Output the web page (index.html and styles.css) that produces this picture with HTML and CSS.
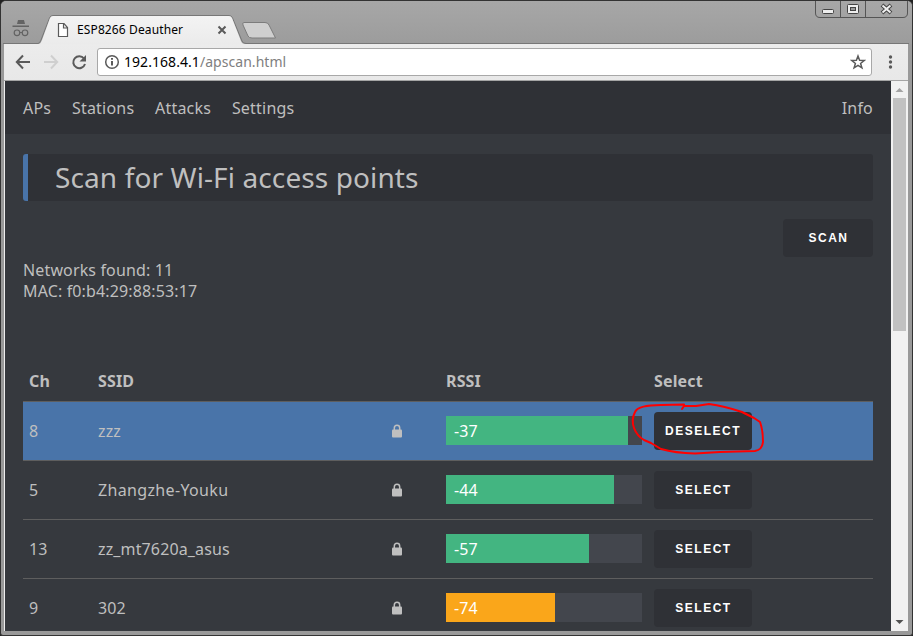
FILE: index.html
```html
<!DOCTYPE html>
<html lang="en">
<head>
<meta charset="utf-8">
<title>ESP8266 Deauther</title>
<link rel="stylesheet" href="styles.css">
</head>
<body>
<div class="window">
  <header class="tabs">
    <svg class="tabs-art" width="913" height="44" viewBox="0 0 913 44">
      <defs><linearGradient id="tab" x2="0" y2="1"><stop stop-color="#f3f3f3"/><stop offset="1" stop-color="#ebebeb"/></linearGradient></defs>
      <path d="M3 43.5H38Q40 43 41 40L49.5 18Q50.500 15.500 53 15.500H229Q231.500 15.500 232.500 18L242 41Q243 43.500 246 43.500H909" fill="none" stroke="#777"/>
      <path d="M39 44Q41 43 42 40L50 18Q51 16 53 16H229Q231 16 232 18L241 41Q242 44 245 44Z" fill="url(#tab)"/>
      <path d="M244 22.500H265Q268 22.500 269 25L275.500 38H252Q249 38 248 36L243 25Q242 22.500 244 22.500Z" fill="#cfcfcf" stroke="#7c7c7c"/>
      <path d="M17 24L18 20H24L25 24ZM12.500 25.500H29V27H12.500Z" fill="#636363"/>
      <g fill="none" stroke="#636363" stroke-width="1.200"><circle cx="17" cy="32.800" r="2.800"/><circle cx="25" cy="32.800" r="2.800"/><path d="M19.800 32.500H22.200"/></g>
      <path d="M58.500 23.500H64L67.500 27.500V36.500H58.500ZM63.500 23.500V28H67.500" fill="#fff" stroke="#5a5a5a" stroke-width="1.200"/>
      <path d="M218.500 26.500L225.500 33.500M225.500 26.500L218.500 33.500" stroke="#5a5a5a" stroke-width="2"/>
      <path d="M815.500 1V13Q815.500 17.500 820 17.500H903Q907.500 17.500 907.500 13V1M840.500 1V17M865.500 1V17" fill="none" stroke="#555"/>
      <rect x="822.500" y="9.500" width="11" height="4" rx="1" fill="#eee" stroke="#444"/>
      <rect x="847.500" y="4.500" width="11" height="9" rx="1" fill="#eee" stroke="#444"/><rect x="850.500" y="7.500" width="5" height="3" fill="#999" stroke="#444"/>
      <path d="M882 5L891 13M891 5L882 13" stroke="#444" stroke-width="4"/><path d="M882.500 5.500L890.500 12.500M890.500 5.500L882.500 12.500" stroke="#eee" stroke-width="2"/>
    </svg>
    <span class="tab-title">ESP8266 Deauther</span>
  </header>
  <div class="toolbar">
    <svg class="nav-icons" width="92" height="36" viewBox="5 44 92 36" fill="none" stroke="#5a5a5a" stroke-width="2">
      <path d="M30 62H17M23 55.500L16.800 62L23 68.500"/>
      <path d="M44 62H57M51 55.500L57.200 62L51 68.500" stroke="#cfcfcf"/>
      <path d="M84 58.500A6 6 0 1 0 85 64"/><path d="M86 55V61.500H79.500Z" fill="#5a5a5a" stroke="none"/>
    </svg>
    <div class="address">
      <svg width="16" height="16" viewBox="0 0 16 16" fill="none" stroke="#5a5a5a"><circle cx="8" cy="8" r="6.300" stroke-width="1.500"/><path d="M8 7V11.500M8 4V5.800" stroke-width="2"/></svg>
      <span class="url"><b>192.168.4.1</b>/apscan.html</span>
      <svg class="star" width="16" height="16" viewBox="0 0 16 16"><path d="M8 2L9.600 6.300L14.200 6.500L10.600 9.400L11.900 13.800L8 11.300L4.100 13.800L5.400 9.400L1.800 6.500L6.400 6.300Z" fill="none" stroke="#5a5a5a" stroke-width="1.500"/></svg>
    </div>
    <svg class="dots" width="5" height="16" viewBox="0 0 5 16" fill="#5a5a5a"><circle cx="2.500" cy="3" r="1.700"/><circle cx="2.500" cy="8" r="1.700"/><circle cx="2.500" cy="13" r="1.700"/></svg>
  </div>
  <div class="viewport">
    <div class="page">
      <nav class="menu">
        <a>APs</a><a>Stations</a><a>Attacks</a><a>Settings</a><a class="info">Info</a>
      </nav>
      <main>
        <h1>Scan for Wi-Fi access points</h1>
        <div class="actions"><button class="scan">SCAN</button></div>
        <p>Networks found: 11<br>MAC: f0:b4:29:88:53:17</p>
        <div class="row head"><span>Ch</span><span>SSID</span><span></span><span>RSSI</span><span>Select</span></div>
        <div class="row selected"><span>8</span><span>zzz</span><svg class="lock" viewBox="0 0 10 14"><path d="M2.300 6V4Q2.300 1.300 5 1.300T7.700 4V6" fill="none" stroke="#bfbfbf" stroke-width="1.500"/><rect y="5.500" width="10" height="8" rx="1" fill="#bfbfbf"/></svg><div class="meter"><div class="bar" style="width:182px">-37</div></div><button class="deselect">DESELECT</button></div>
        <div class="row"><span>5</span><span class="wide">Zhangzhe-Youku</span><svg class="lock" viewBox="0 0 10 14"><path d="M2.300 6V4Q2.300 1.300 5 1.300T7.700 4V6" fill="none" stroke="#bfbfbf" stroke-width="1.500"/><rect y="5.500" width="10" height="8" rx="1" fill="#bfbfbf"/></svg><div class="meter"><div class="bar" style="width:168px">-44</div></div><button>SELECT</button></div>
        <div class="row"><span>13</span><span>zz_mt7620a_asus</span><svg class="lock" viewBox="0 0 10 14"><path d="M2.300 6V4Q2.300 1.300 5 1.300T7.700 4V6" fill="none" stroke="#bfbfbf" stroke-width="1.500"/><rect y="5.500" width="10" height="8" rx="1" fill="#bfbfbf"/></svg><div class="meter"><div class="bar" style="width:143px">-57</div></div><button>SELECT</button></div>
        <div class="row"><span>9</span><span>302</span><svg class="lock" viewBox="0 0 10 14"><path d="M2.300 6V4Q2.300 1.300 5 1.300T7.700 4V6" fill="none" stroke="#bfbfbf" stroke-width="1.500"/><rect y="5.500" width="10" height="8" rx="1" fill="#bfbfbf"/></svg><div class="meter"><div class="bar weak" style="width:109px">-74</div></div><button>SELECT</button></div>
      </main>
    </div>
    <div class="scrollbar">
      <svg width="17" height="17"><path d="M4.500 11L8.500 7L12.500 11Z" fill="#a3a3a3"/></svg>
      <div class="thumb"></div>
      <svg class="down" width="17" height="17"><path d="M4.500 6L8.500 10L12.500 6Z" fill="#505050"/></svg>
    </div>
  </div>
  <svg class="annotation" width="140" height="60" viewBox="625 398 140 60" fill="none" stroke="#f00" stroke-width="2" stroke-linecap="round" stroke-linejoin="round"><path d="M682 409L684 406V404.500L661 405Q638 405 635 412Q631 420 634 428Q637 436 644 440L651 443L661 449Q675 453 695 453.500L720 452L755 451Q762 450 763 442Q763 430 760 422L754 418L742 412Q724 406 709 404L696 406L684 406"/></svg>
</div>
</body>
</html>
```
FILE: styles.css
```css
* { box-sizing: border-box; }
body { margin: 0; background: #222; font-family: "Noto Sans", "Open Sans", sans-serif; }
.window {
  position: relative;
  width: 913px;
  height: 636px;
  overflow: hidden;
  display: flex;
  flex-direction: column;
  background: #999;
  border: 1px solid #333;
  border-radius: 6px 6px 3px 3px;
}
.tabs { height: 43px; flex: none; background: linear-gradient(#a7a7a7, #9c9c9c); position: relative; padding: 20px 0 0 76px; }
.tabs-art { position: absolute; left: -1px; top: -1px; }
.tab-title { position: relative; display: block; font-size: 12px; line-height: 18px; letter-spacing: 0.12px; color: #000; }
.toolbar {
  height: 37px;
  flex: none;
  margin: 0 4px 0 3px;
  padding: 0 0 0 1px;
  display: flex;
  align-items: center;
  background: linear-gradient(#ececec, #e8e8e8);
  border-bottom: 1px solid #a5a5a5;
}
.nav-icons { flex: none; }
.address {
  width: 775px;
  height: 28px;
  padding: 0 5px 0 6px;
  display: flex;
  align-items: center;
  border: 1px solid #a8a8a8;
  border-radius: 3px;
  background: #fff;
}
.url { margin-left: 4px; font-size: 14px; line-height: 20px; letter-spacing: 0.05px; color: #808080; }
.url b { font-weight: 400; color: #000; }
.star { margin-left: auto; }
.dots { margin-left: 16px; }
.viewport { height: 550px; flex: none; display: flex; margin: 0 4px 0 3px; border-left: 1px solid #eee; }
.page { width: 886px; height: 550px; overflow: hidden; background: #36393e; color: #bfbfbf; font-size: 16px; line-height: 21px; letter-spacing: 0.14px; }
.menu { height: 53px; display: flex; align-items: center; padding: 2px 18px 0; background: #2f3136; letter-spacing: 0.2px; }
.menu a { margin-right: 20.8px; }
.menu .info { margin: 0 0 0 auto; }
main { padding: 20px 18px 0; }
h1 { height: 47px; margin: 0; padding-left: 27px; border-left: 5px solid #4974a9; border-radius: 3px; background: #2f3136; font-size: 28px; line-height: 47px; font-weight: 400; letter-spacing: 0.11px; }
.actions { display: flex; justify-content: flex-end; margin-top: 18px; }
button {
  width: 98px;
  height: 38px;
  padding: 0 0 0 1px;
  border: 0;
  border-radius: 4px;
  background: #2f3136;
  color: #fff;
  font: 700 12px/38px "Liberation Sans", sans-serif;
  letter-spacing: 1.5px;
}
.scan { width: 90px; }
.deselect { padding: 0; }
p { margin: 3px 0 0; }
.row { height: 59px; display: grid; grid-template-columns: 69px 294px 54px 208px 1fr; align-items: center; padding-left: 6px; border-bottom: 1px solid #5e5e5e; }
.head { height: 41px; margin-top: 59px; font-weight: 700; }
.selected { background: #4974a9; }
.wide { letter-spacing: 0.35px; }
.lock { width: 10px; height: 14px; }
.meter { width: 196px; height: 29px; margin-bottom: 2px; background: #43464d; }
.bar { height: 29px; padding-left: 8px; line-height: 30px; background: #43b581; color: #fff; }
.weak { background: #faa61a; }
.scrollbar { width: 17px; height: 550px; display: flex; flex-direction: column; background: #f1f1f1; }
.scrollbar svg { flex: none; }
.thumb { width: 13px; height: 233px; margin-left: 2px; background: #c1c1c1; }
.down { margin-top: auto; }
.annotation { position: absolute; left: 624px; top: 397px; }
```
